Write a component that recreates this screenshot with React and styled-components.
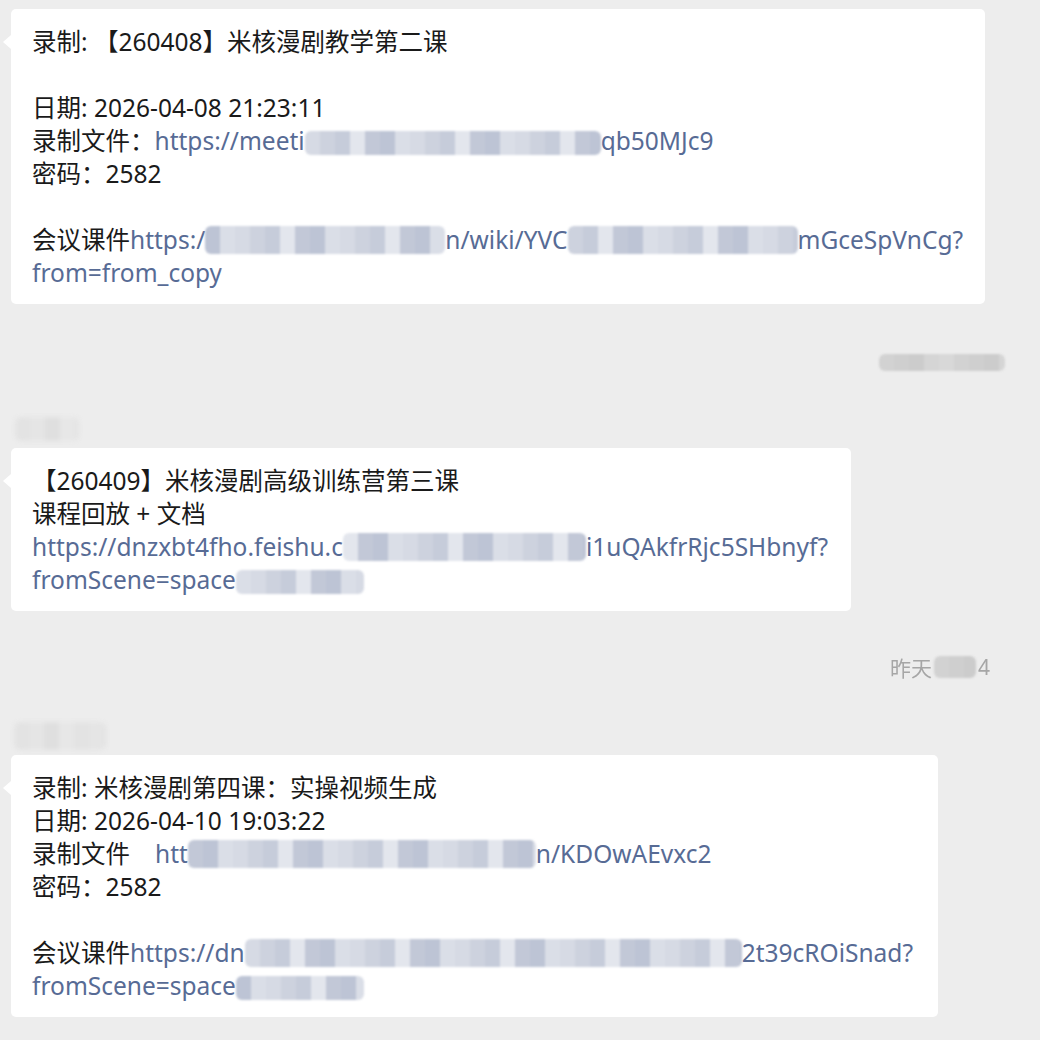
import React from "react";
import styled, { createGlobalStyle } from "styled-components";

const GlobalStyle = createGlobalStyle`
  html, body {
    margin: 0;
    padding: 0;
    background: #ededed;
  }
  body {
    font-family: "Noto Sans", "Noto Sans CJK SC", sans-serif;
  }
`;

const Page = styled.div`
  width: 1040px;
  height: 1040px;
  overflow: hidden;
  box-sizing: border-box;
  padding: 9px 0 0 11px;
  display: flex;
  flex-direction: column;
  background: #ededed;
`;

const Bubble = styled.div`
  position: relative;
  box-sizing: border-box;
  width: ${(p) => p.$w}px;
  padding: 16px 20px 15px 21px;
  background: #ffffff;
  border-radius: 5px;
  font-size: 24.5px;
  line-height: 33px;
  color: #1a1a1a;
  white-space: nowrap;

  &::before {
    content: "";
    position: absolute;
    left: -8px;
    top: 26px;
    border-style: solid;
    border-width: 7px 8px 7px 0;
    border-color: transparent #ffffff transparent transparent;
  }
`;

const Line = styled.div`
  height: 33px;
`;

const Link = styled.span`
  color: #576b95;
`;

const TimeRow = styled.div`
  display: flex;
  justify-content: flex-end;
  align-items: center;
  height: 26px;
  margin-top: ${(p) => p.$top}px;
  padding-right: ${(p) => p.$right}px;
  font-size: 21px;
  color: #a6a6a6;
`;

const TimeText = styled.span`
  filter: blur(0.5px);
  margin: 0 2px;
`;

const NameRow = styled.div`
  display: flex;
  align-items: center;
  height: 28px;
  margin-top: ${(p) => p.$top}px;
  margin-left: ${(p) => p.$left}px;
  margin-bottom: 5px;
`;

const Mosaic = styled.span`
  display: inline-block;
  width: ${(p) => p.$w}px;
  height: ${(p) => p.$h || 24}px;
  vertical-align: ${(p) => p.$va || -5}px;
  background: ${(p) => p.$bg};
  filter: blur(${(p) => p.$blur || 1.2}px);
  border-radius: 6px;
`;

const palettes = {
  link: ["#c6ccda", "#d6dae4", "#bdc4d5", "#e3e6ed", "#cdd2de", "#dadee7", "#c2c8d7"],
  gray: ["#d2d2d2", "#cccccc", "#d8d8d8", "#cfcfcf", "#d5d5d5"],
  light: ["#e3e3e3", "#e7e7e7", "#dfdfdf", "#e5e5e5"],
  white: ["#ffffff", "#f7f7f7", "#ffffff"],
};

const stripes = (w, tone, seed = 0) => {
  const cols = palettes[tone];
  const tile = 15;
  const stops = [];
  for (let x = 0, i = seed; x < w; x += tile, i += 3) {
    const c = cols[i % cols.length];
    stops.push(`${c} ${x}px`, `${c} ${Math.min(x + tile, w)}px`);
  }
  return `linear-gradient(90deg, ${stops.join(", ")})`;
};

const Blur = ({ w, tone = "link", seed, h, va, blur }) => (
  <Mosaic $w={w} $h={h} $va={va} $blur={blur} $bg={stripes(w, tone, seed)} />
);

export default function App() {
  return (
    <>
      <GlobalStyle />
      <Page>
        <Bubble $w={974}>
          <Line>录制: 【260408】米核漫剧教学第二课</Line>
          <Line />
          <Line>日期: 2026-04-08 21:23:11</Line>
          <Line>
            录制文件：<Link>https://meeti</Link>
            <Blur w={296} seed={1} />
            <Link>qb50MJc9</Link>
          </Line>
          <Line>密码：2582</Line>
          <Line />
          <Line>
            会议课件<Link>https:/</Link>
            <Blur w={240} seed={2} h={28} />
            <Link>n/wiki/YVC</Link>
            <Blur w={230} seed={4} h={28} />
            <Link>mGceSpVnCg?</Link>
          </Line>
          <Line>
            <Link>from=from_copy</Link>
            <Blur w={56} tone="white" h={30} />
          </Line>
        </Bubble>

        <TimeRow $top={45} $right={35}>
          <Blur w={126} tone="gray" h={17} va={0} />
        </TimeRow>

        <NameRow $top={40} $left={4}>
          <Blur w={64} tone="light" h={24} va={0} blur={2} />
        </NameRow>

        <Bubble $w={840}>
          <Line>【260409】米核漫剧高级训练营第三课</Line>
          <Line>课程回放 + 文档</Line>
          <Line>
            <Link>https://dnzxbt4fho.feishu.c</Link>
            <Blur w={243} seed={3} h={28} />
            <Link>i1uQAkfrRjc5SHbnyf?</Link>
          </Line>
          <Line>
            <Link>fromScene=space</Link>
            <Blur w={128} seed={5} />
          </Line>
        </Bubble>

        <TimeRow $top={43} $right={48}>
          <TimeText>昨天</TimeText>
          <Blur w={42} tone="gray" h={22} va={0} />
          <TimeText>4</TimeText>
        </TimeRow>

        <NameRow $top={42} $left={3}>
          <Blur w={92} tone="light" h={28} va={0} blur={2} />
        </NameRow>

        <Bubble $w={927}>
          <Line>录制: 米核漫剧第四课：实操视频生成</Line>
          <Line>日期: 2026-04-10 19:03:22</Line>
          <Line>
            录制文件
            <Blur w={25} tone="white" h={30} />
            <Link>htt</Link>
            <Blur w={348} seed={6} h={28} />
            <Link>n/KDOwAEvxc2</Link>
          </Line>
          <Line>密码：2582</Line>
          <Line />
          <Line>
            会议课件<Link>https://dn</Link>
            <Blur w={497} seed={1} h={28} />
            <Link>2t39cROiSnad?</Link>
          </Line>
          <Line>
            <Link>fromScene=space</Link>
            <Blur w={128} seed={2} />
          </Line>
        </Bubble>
      </Page>
    </>
  );
}
